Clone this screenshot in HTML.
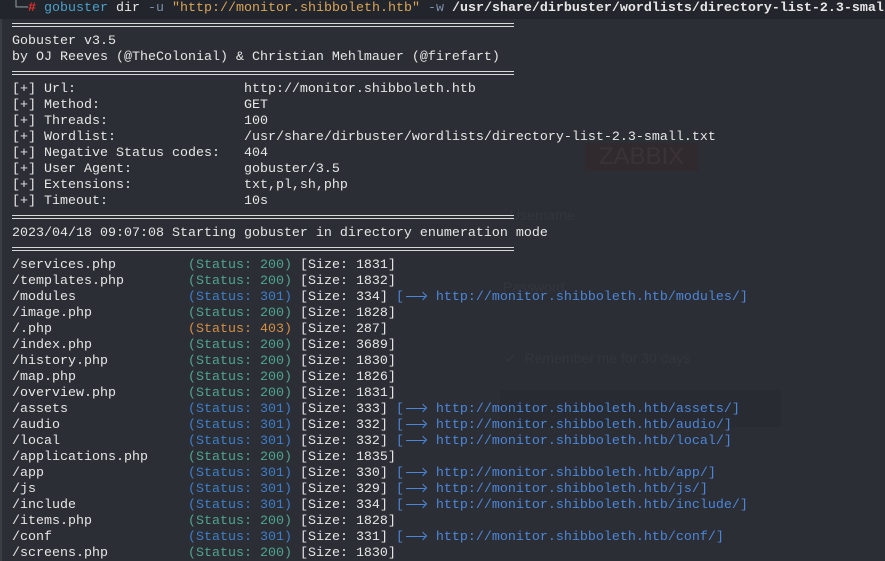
<!DOCTYPE html>
<html><head><meta charset="utf-8"><style>
html,body{margin:0;padding:0;width:885px;height:561px;overflow:hidden;background:#2b2e35;}
body{position:relative;font-family:"Liberation Mono","DejaVu Sans Mono",monospace;font-size:13.33px;color:#e6e6e6;}
.top{position:absolute;left:0;top:0;width:885px;height:19px;background:#22252b;}
.l{position:absolute;left:12px;white-space:pre;line-height:16px;height:16px;}
.sep{position:absolute;left:12px;width:502px;height:2px;border-top:1px solid #d8d8d8;border-bottom:1px solid #d8d8d8;}
.g{color:#4fa58f}.b{color:#3f7fc9}.o{color:#d58f45}.u{color:#4d86d8}
.a{display:inline-block;width:24px;height:8px;position:relative;vertical-align:middle}
.a:before{content:"";position:absolute;left:2px;right:3px;top:4px;border-top:1px solid #4d86d8}
.a:after{content:"";position:absolute;right:2px;top:1px;width:5px;height:5px;border-top:1px solid #4d86d8;border-right:1px solid #4d86d8;transform:rotate(45deg)}
.bg{position:absolute;font-family:"Liberation Sans",sans-serif;color:#33363d;}
</style></head><body>
<div class="top"></div>
<div style="position:absolute;left:0;top:19px;width:2px;height:542px;background:#3a3d44"></div>
<div class="bg" style="left:585px;top:143px;width:113px;height:28px;background:#302a2e;color:#3a3237;font-size:24px;text-align:center;line-height:28px;">ZABBIX</div>
<div class="bg" style="left:510px;top:207px;font-size:14px">Username</div>
<div class="bg" style="left:503px;top:279px;font-size:14px">Password</div>
<div class="bg" style="left:505px;top:350px;font-size:14px">✓ &nbsp;Remember me for 30 days</div>
<div style="position:absolute;left:500px;top:390px;width:281px;height:37px;background:#282b31"></div>
<div class="l" style="left:12px;top:1px"><span style="color:#9aa">└─</span><span style="color:#e03030;font-weight:bold">#</span> <span style="color:#4aa0c8">gobuster</span> dir <span style="color:#7a8fa8">-u</span> <span style="color:#d9a55a">"http://monitor.shibboleth.htb"</span> <span style="color:#7a8fa8">-w</span> <b>/usr/share/dirbuster/wordlists/directory-list-2.3-small</b></div>
<div class="sep" style="top:23px"></div>
<div class="l" style="top:34px">Gobuster v3.5</div>
<div class="l" style="top:50px">by OJ Reeves (@TheColonial) &amp; Christian Mehlmauer (@firefart)</div>
<div class="sep" style="top:71px"></div>
<div class="l" style="top:82px">[+] Url:                     http://monitor.shibboleth.htb</div>
<div class="l" style="top:98px">[+] Method:                  GET</div>
<div class="l" style="top:114px">[+] Threads:                 100</div>
<div class="l" style="top:130px">[+] Wordlist:                /usr/share/dirbuster/wordlists/directory-list-2.3-small.txt</div>
<div class="l" style="top:146px">[+] Negative Status codes:   404</div>
<div class="l" style="top:162px">[+] User Agent:              gobuster/3.5</div>
<div class="l" style="top:178px">[+] Extensions:              txt,pl,sh,php</div>
<div class="l" style="top:194px">[+] Timeout:                 10s</div>
<div class="sep" style="top:215px"></div>
<div class="l" style="top:226px">2023/04/18 09:07:08 Starting gobuster in directory enumeration mode</div>
<div class="sep" style="top:247px"></div>
<div class="l" style="top:258px">/services.php         <span class="g">(Status: 200)</span> [Size: 1831]</div>
<div class="l" style="top:274px">/templates.php        <span class="g">(Status: 200)</span> [Size: 1832]</div>
<div class="l" style="top:290px">/modules              <span class="b">(Status: 301)</span> [Size: 334] <span class="u">[<span class="a"></span> http://monitor.shibboleth.htb/modules/]</span></div>
<div class="l" style="top:306px">/image.php            <span class="g">(Status: 200)</span> [Size: 1828]</div>
<div class="l" style="top:322px">/.php                 <span class="o">(Status: 403)</span> [Size: 287]</div>
<div class="l" style="top:338px">/index.php            <span class="g">(Status: 200)</span> [Size: 3689]</div>
<div class="l" style="top:354px">/history.php          <span class="g">(Status: 200)</span> [Size: 1830]</div>
<div class="l" style="top:370px">/map.php              <span class="g">(Status: 200)</span> [Size: 1826]</div>
<div class="l" style="top:386px">/overview.php         <span class="g">(Status: 200)</span> [Size: 1831]</div>
<div class="l" style="top:402px">/assets               <span class="b">(Status: 301)</span> [Size: 333] <span class="u">[<span class="a"></span> http://monitor.shibboleth.htb/assets/]</span></div>
<div class="l" style="top:418px">/audio                <span class="b">(Status: 301)</span> [Size: 332] <span class="u">[<span class="a"></span> http://monitor.shibboleth.htb/audio/]</span></div>
<div class="l" style="top:434px">/local                <span class="b">(Status: 301)</span> [Size: 332] <span class="u">[<span class="a"></span> http://monitor.shibboleth.htb/local/]</span></div>
<div class="l" style="top:450px">/applications.php     <span class="g">(Status: 200)</span> [Size: 1835]</div>
<div class="l" style="top:466px">/app                  <span class="b">(Status: 301)</span> [Size: 330] <span class="u">[<span class="a"></span> http://monitor.shibboleth.htb/app/]</span></div>
<div class="l" style="top:482px">/js                   <span class="b">(Status: 301)</span> [Size: 329] <span class="u">[<span class="a"></span> http://monitor.shibboleth.htb/js/]</span></div>
<div class="l" style="top:498px">/include              <span class="b">(Status: 301)</span> [Size: 334] <span class="u">[<span class="a"></span> http://monitor.shibboleth.htb/include/]</span></div>
<div class="l" style="top:514px">/items.php            <span class="g">(Status: 200)</span> [Size: 1828]</div>
<div class="l" style="top:530px">/conf                 <span class="b">(Status: 301)</span> [Size: 331] <span class="u">[<span class="a"></span> http://monitor.shibboleth.htb/conf/]</span></div>
<div class="l" style="top:546px">/screens.php          <span class="g">(Status: 200)</span> [Size: 1830]</div>
</body></html>
